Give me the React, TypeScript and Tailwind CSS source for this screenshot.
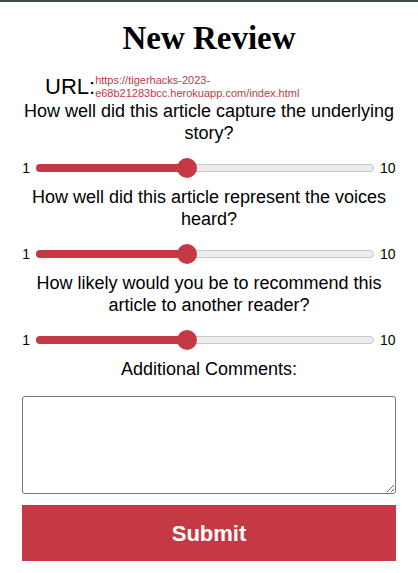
import React from "react";

const questions = [
  "How well did this article capture the underlying story?",
  "How well did this article represent the voices heard?",
  "How likely would you be to recommend this article to another reader?",
];

function Slider({ value }: { value: number }) {
  const pct = ((value - 1) / 9) * 100;
  return (
    <div className="flex items-center gap-[4px] px-[20px] text-[14px] text-black">
      <span className="w-[10px] text-right">1</span>
      <div className="relative mx-[2px] h-[22px] flex-1">
        <div className="absolute left-0 right-0 top-[7px] h-[8px] rounded-full border border-[#c8c8c8] bg-[#ececec]" />
        <div
          className="absolute left-0 top-[7px] h-[8px] rounded-full bg-[#c43943]"
          style={{ width: `calc(${pct}% * 0.94 + 11px)` }}
        />
        <div
          className="absolute top-[1px] h-[20px] w-[20px] rounded-full bg-[#c43943]"
          style={{ left: `calc(${pct}% * 0.94)` }}
        />
      </div>
      <span className="w-[18px]">10</span>
    </div>
  );
}

export default function App() {
  return (
    <div className="min-h-[573px] border-t-2 border-[#3f4a4f] bg-white font-['Liberation_Sans',Arial,sans-serif]">
      <h1 className="pt-[17px] text-center font-['Liberation_Serif',serif] text-[33px] font-bold leading-[38px] text-black">
        New Review
      </h1>
      <div className="mt-[17px] flex items-center pl-[45px]">
        <span className="text-[22px] leading-[26px] text-black">URL:</span>
        <a href="#" className="text-[11px] leading-[13px] text-[#c43943]">
          https://tigerhacks-2023-
          <br />
          e68b21283bcc.herokuapp.com/index.html
        </a>
      </div>
      {questions.map((q) => (
        <div key={q}>
          <p className="px-[20px] text-center text-[18px] leading-[22px] text-black">{q}</p>
          <div className="mt-[13px] mb-[7px]">
            <Slider value={5} />
          </div>
        </div>
      ))}
      <p className="text-center text-[18px] leading-[22px] text-black">Additional Comments:</p>
      <div className="mx-[22px] mt-[16px]">
        <textarea className="block h-[98px] w-full rounded-[3px] border border-[#767676] bg-white" />
        <button className="mt-[11px] h-[56px] w-full bg-[#c43943] text-[22px] font-bold text-white">
          Submit
        </button>
      </div>
    </div>
  );
}
